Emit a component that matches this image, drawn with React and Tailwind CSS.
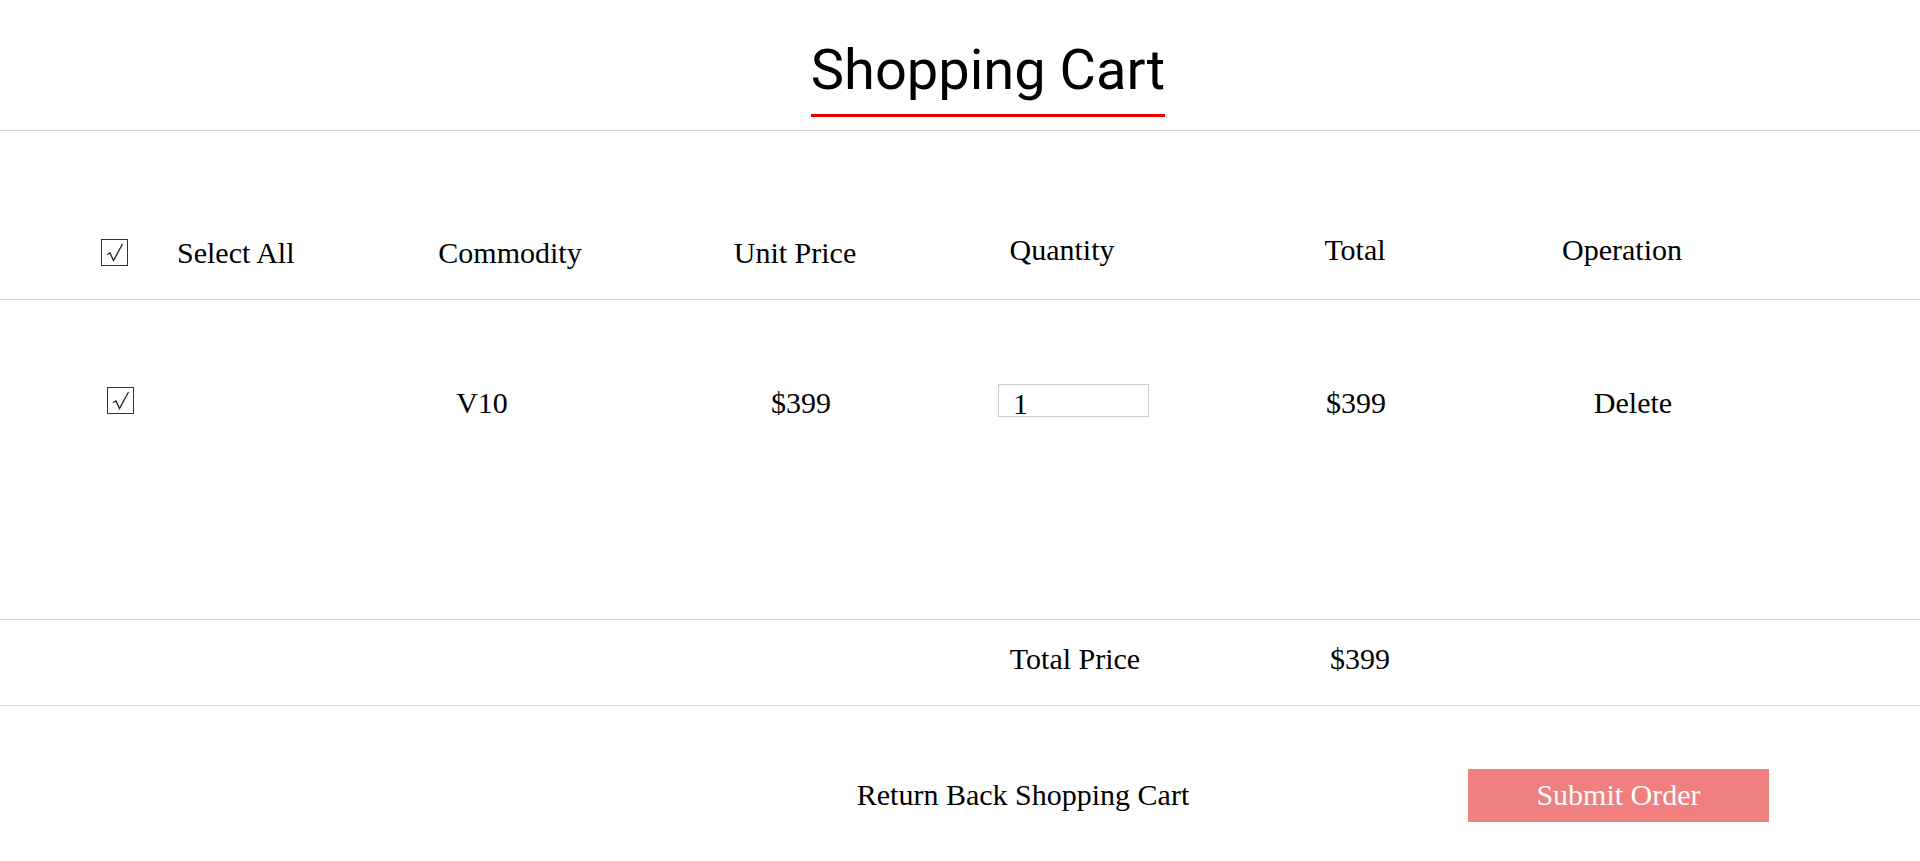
function Check({ className = "" }) {
  return (
    <div className={"w-[27px] h-[27px] border border-[#333] flex items-center justify-center " + className}>
      <svg width="21" height="21" viewBox="0 0 21 21" fill="none" stroke="#222" strokeWidth="1.3">
        <path d="M3 12.5 L6 11 L9.5 18.5 L18.5 2" />
      </svg>
    </div>
  );
}

export default function App() {
  return (
    <div className="min-h-screen bg-white text-black font-['Liberation_Serif','Times_New_Roman',serif] text-[30px] leading-[34px]">
      <header className="h-[131px] border-b border-[#d3d3d3] flex justify-center items-start pl-[56px] pt-[42px]">
        <h1 className="font-['Roboto',sans-serif] text-[56px] leading-[56px] pb-[16px] border-b-[3px] border-[#e60000]">
          Shopping Cart
        </h1>
      </header>

      <div className="h-[169px] border-b border-[#d3d3d3] flex items-start pt-[105px]">
        <div className="w-[368px] flex items-start pl-[101px]">
          <Check className="mt-[3px]" />
          <span className="ml-[49px]">Select All</span>
        </div>
        <div className="w-[284px] text-center">Commodity</div>
        <div className="w-[286px] text-center">Unit Price</div>
        <div className="w-[248px] text-center -mt-[3px]">Quantity</div>
        <div className="w-[338px] text-center -mt-[3px]">Total</div>
        <div className="w-[196px] text-center -mt-[3px]">Operation</div>
      </div>

      <div className="h-[320px] border-b border-[#d3d3d3] flex items-start pt-[84px]">
        <div className="w-[300px] pl-[107px] mt-[3px]">
          <Check />
        </div>
        <div className="w-[364px] text-center mt-[2px]">V10</div>
        <div className="w-[274px] text-center mt-[2px]">$399</div>
        <div className="w-[271px] flex justify-center">
          <div className="w-[151px] h-[33px] border border-[#ccc] pl-[14px] pt-[7px] leading-[24px]">1</div>
        </div>
        <div className="w-[294px] text-center mt-[2px]">$399</div>
        <div className="w-[260px] text-center mt-[2px]">Delete</div>
      </div>

      <div className="h-[86px] border-b border-[#d3d3d3] flex items-start pt-[22px]">
        <div className="w-[938px]" />
        <div className="w-[274px] text-center">Total Price</div>
        <div className="w-[296px] text-center">$399</div>
      </div>

      <div className="flex items-start mt-[63px]">
        <div className="ml-[800px] w-[446px] text-center mt-[9px]">Return Back Shopping Cart</div>
        <button className="ml-[222px] w-[301px] h-[53px] bg-[#f08080] text-white flex items-center justify-center pb-[2px]">
          Submit Order
        </button>
      </div>
    </div>
  );
}
